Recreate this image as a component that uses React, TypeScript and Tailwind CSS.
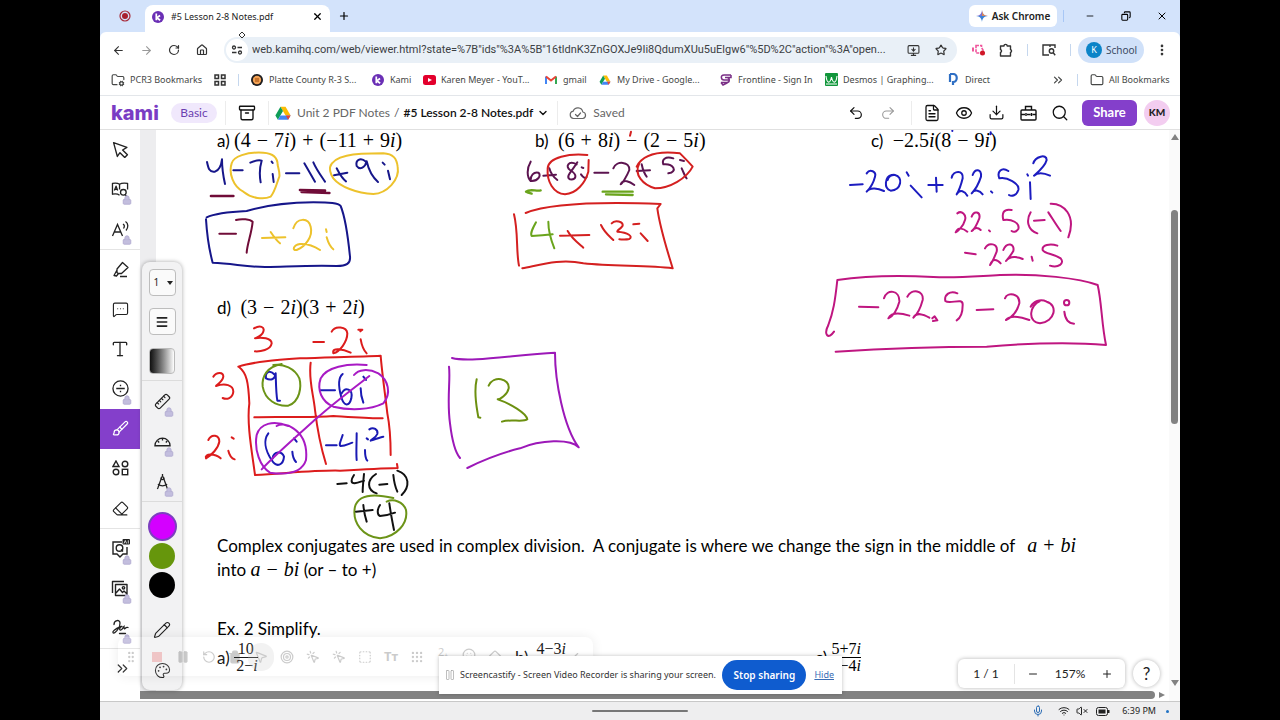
import React from "react";
import {
  Archive, ArrowLeft, ArrowRight, Brush, ChevronDown, ChevronsRight, Copy, Download,
  Eraser, Eye, FileText, Folder, FolderCog, House, Lock, MessageSquareMore, Mic, Minus,
  MonitorDown, MousePointer2, Palette, Pencil, Plus, Redo2, RotateCw, Ruler, Search, Star, Type,
  Undo2, Wifi, X, EllipsisVertical, Menu, VolumeX,
  RotateCcw, Trash2, Target, MousePointerClick, SquareDashed, Grip, GripVertical, Smile, Diamond, Check, Pause,
} from "lucide-react";

const ui = "font-['Noto_Sans','Open_Sans',sans-serif]";
const kamiFont = "font-['Lato','Open_Sans',sans-serif]";

function KamiMark({ className }: { className: string }) {
  return (
    <svg viewBox="0 0 14 14" className={className}>
      <circle cx="7" cy="7" r="7" fill="#6a2fb5" />
      <path d="M5 2.8v8M9.4 5.2 5.6 7.9l3.9 2.9" fill="none" stroke="#fff" strokeWidth="2" />
    </svg>
  );
}

function DriveMark({ className }: { className: string }) {
  return (
    <svg viewBox="0 0 24 22" className={className}>
      <path d="M8 1h8l8 14h-8z" fill="#fbbc04" />
      <path d="M8 1 0 15l4 6.500L12 8z" fill="#0f9d58" />
      <path d="M8 15h16l-4 6.500H4z" fill="#4285f4" />
      <path d="M16.500 15H24l-4 6.500z" fill="#ea4335" />
    </svg>
  );
}

function IconButton({ label, className = "w-7", children }: { label: string; className?: string; children: React.ReactNode }) {
  return (
    <button aria-label={label} className={`flex h-7 shrink-0 items-center justify-center ${className}`}>
      {children}
    </button>
  );
}

function TabStrip() {
  return (
    <div className="flex h-8 shrink-0 items-end bg-[#d3e3fb]">
      <div className="flex h-8 w-[45px] items-center justify-center pl-1">
        <svg viewBox="0 0 12 12" className="size-3">
          <circle cx="6" cy="6" r="5" fill="none" stroke="#a82a38" strokeWidth="1.2" />
          <circle cx="6" cy="6" r="3" fill="#a8202e" />
        </svg>
      </div>
      <div className="flex h-[27px] w-[185px] items-center rounded-t-lg bg-white px-[7px] pb-1">
        <KamiMark className="mr-[7px] size-3 shrink-0" />
        <span className="flex-1 whitespace-nowrap text-[9px] text-[#222]">#5 Lesson 2-8 Notes.pdf</span>
        <button aria-label="Close tab"><X className="size-[11px]" strokeWidth={2.8} /></button>
      </div>
      <IconButton label="New tab" className="h-8 w-7"><Plus className="size-3" strokeWidth={2.4} /></IconButton>
      <div className="flex h-8 flex-1 items-center justify-end">
        <button className="flex h-[22px] w-[88px] items-center justify-center gap-1 rounded-md bg-white text-[10px] font-semibold text-[#222]">
          <svg viewBox="0 0 12 12" className="size-3">
            <path d="M6 0C6.500 4 8 5.500 12 6H0C4 5.500 5.500 4 6 0" fill="#7b6fd0" />
            <path d="M0 6h12C8 6.500 6.500 8 6 12 5.500 8 4 6.500 0 6" fill="#3b82d6" />
            <path d="M6 0C6.500 4 8 5.500 12 6H6z" fill="#d88a5a" />
          </svg>
          Ask Chrome
        </button>
        <div className="ml-1.5 h-3 w-px bg-[#a8c7f5]" />
        <IconButton label="Minimize" className="ml-2 w-9"><Minus className="size-2.5" /></IconButton>
        <IconButton label="Restore" className="w-9"><Copy className="size-2.5 -scale-x-100" strokeWidth={2.6} /></IconButton>
        <IconButton label="Close" className="w-9"><X className="size-3" /></IconButton>
      </div>
    </div>
  );
}

function AddressRow() {
  return (
    <div className="flex h-9 shrink-0 items-center rounded-t-md bg-white pl-1 text-[#333]">
      <IconButton label="Back"><ArrowLeft className="size-[13px]" /></IconButton>
      <IconButton label="Forward"><ArrowRight className="size-[13px] text-[#999]" /></IconButton>
      <IconButton label="Reload"><RotateCw className="size-3" strokeWidth={2.4} /></IconButton>
      <IconButton label="Home"><House className="size-3" strokeWidth={2.4} /></IconButton>
      <div className="ml-2 flex h-[26px] min-w-0 flex-1 items-center rounded-full bg-[#e9f0f7] pl-0.5">
        <button aria-label="Site information" className="flex size-[22px] shrink-0 items-center justify-center rounded-full bg-white">
          <svg viewBox="0 0 12 12" className="size-3" fill="none" stroke="#333" strokeWidth="1.3">
            <circle cx="3" cy="3.500" r="1.500" /><path d="M6.500 3.500H11M1 8.500h4.500" /><circle cx="9" cy="8.500" r="1.500" />
          </svg>
        </button>
        <input
          aria-label="Address"
          className="ml-1 min-w-0 flex-1 bg-transparent font-['Roboto',sans-serif] text-[11px] text-[#3c4043] outline-none"
          defaultValue={'web.kamihq.com/web/viewer.html?state=%7B"ids"%3A%5B"16tldnK3ZnGOXJe9Ii8QdumXUu5uElgw6"%5D%2C"action"%3A"open...'}
        />
        <IconButton label="Install" className="w-6"><MonitorDown className="size-[13px]" /></IconButton>
        <IconButton label="Bookmark" className="mx-1 w-6"><Star className="size-3" strokeWidth={2.4} /></IconButton>
      </div>
      <IconButton label="Screencastify" className="ml-[7px] w-7">
        <svg viewBox="0 0 13 12" className="h-3 w-[13px]">
          <path d="M4 1.500h5.500v2L11 6 9.500 9H4z" fill="none" stroke="#f0569c" strokeWidth="1.6" strokeDasharray="3 1" />
          <path d="M0 3.500h2v4H0z" fill="#f0569c" />
          <circle cx="10.500" cy="9" r="2.500" fill="#d01828" />
        </svg>
      </IconButton>
      <IconButton label="Extensions">
        <svg viewBox="0 0 14 14" className="size-3.5" fill="none" stroke="#333" strokeWidth="1.4" strokeLinejoin="round">
          <path d="M1.500 3H5a1.600 1.600 0 0 1 3.200 0h3.300v3.500a1.600 1.600 0 0 1 0 3V13h-10V9.500a1.600 1.600 0 0 0 0-3z" />
        </svg>
      </IconButton>
      <div className="mx-[7px] h-3 w-px bg-[#c5d7ee]" />
      <IconButton label="Search tabs">
        <svg viewBox="0 0 14 12" className="h-3 w-3.5" fill="none" stroke="#333" strokeWidth="1.4">
          <path d="M13 4V1H1v10h6M8 1v2" /><circle cx="9.500" cy="7" r="2.200" /><path d="m11.200 8.800 2 2.400" />
        </svg>
      </IconButton>
      <div className="mx-[7px] h-3 w-px bg-[#c5d7ee]" />
      <button className="flex h-[26px] w-[66px] shrink-0 items-center gap-1 rounded-full bg-[#d0e1f9] pl-2 text-[10px] text-[#3b4a63]">
        <span className="flex size-4 items-center justify-center rounded-full bg-[#0b84c8] text-[9px] text-white">K</span>
        School
      </button>
      <IconButton label="Menu" className="mx-1 w-7"><EllipsisVertical className="size-3.5" strokeWidth={2.6} /></IconButton>
    </div>
  );
}

function Bookmark({ icon, text, width }: { icon: React.ReactNode; text: string; width: string }) {
  return (
    <a href="#" className={`flex shrink-0 items-center gap-[5px] whitespace-nowrap ${width}`}>
      <span className="flex w-3.5 shrink-0 items-center justify-center">{icon}</span>
      {text}
    </a>
  );
}

function BookmarksRow() {
  return (
    <nav className="flex h-[28px] shrink-0 items-center border-b border-[#e3e6ea] bg-white pb-1 pl-[11px] text-[9px] text-[#454746]">
      <Bookmark width="w-[103px]" text="PCR3 Bookmarks" icon={<FolderCog className="size-3.5" />} />
      <svg viewBox="0 0 12 12" className="size-3 shrink-0" fill="none" stroke="#333" strokeWidth="1.5">
        <path d="M1 1h3.500v3.500H1zM7.500 1H11v3.500H7.500zM1 7.500h3.500V11H1zM7.500 7.500H11V11H7.500z" />
      </svg>
      <div className="ml-3 mr-[11px] h-3 w-px shrink-0 bg-[#c5d7ee]" />
      <Bookmark width="w-[121px]" text="Platte County R-3 S..." icon={
        <svg viewBox="0 0 12 12" className="size-3"><circle cx="6" cy="6" r="6" fill="#1d1d1f" /><circle cx="6" cy="6" r="4.200" fill="#f2a154" /><path d="M4 4h4v4H4z" fill="#c8742c" /></svg>
      } />
      <Bookmark width="w-[51px]" text="Kami" icon={<KamiMark className="size-3" />} />
      <Bookmark width="w-[122px]" text="Karen Meyer - YouT..." icon={
        <svg viewBox="0 0 13 10" className="h-2.5 w-[13px]"><rect width="13" height="10" rx="2.500" fill="#e3002c" /><path d="m5 3 4 2-4 2z" fill="#fff" /></svg>
      } />
      <Bookmark width="w-[54px]" text="gmail" icon={
        <svg viewBox="0 0 12 9" className="h-[9px] w-3" fill="none" strokeWidth="2"><path d="M1 9V1.500" stroke="#4285f4" /><path d="M11 9V1.500" stroke="#34a853" /><path d="m1 1.500 5 4 5-4" stroke="#ea4335" /></svg>
      } />
      <Bookmark width="w-[121px]" text="My Drive - Google..." icon={<DriveMark className="h-2.5 w-3" />} />
      <Bookmark width="w-[105px]" text="Frontline - Sign In" icon={
        <svg viewBox="0 0 12 12" className="size-3" fill="none" stroke="#7a2f86" strokeWidth="1.500"><path d="M11 1H4C0 1 1 6 4 6h5M11 1v2.500H5M1 8.500h6c3 0 3-5 0-5M1 8.500 3 11l5-2.500" /></svg>
      } />
      <Bookmark width="w-[122px]" text="Desmos | Graphing..." icon={
        <svg viewBox="0 0 13 13" className="size-[13px]"><rect width="13" height="13" rx="1" fill="#11963b" /><path d="M1 3c1 8 4 8 5.500 1C8 11 11 11 12 3M1 11h11" fill="none" stroke="#fff" strokeWidth="1.100" /></svg>
      } />
      <Bookmark width="w-[46px]" text="Direct" icon={
        <svg viewBox="0 0 10 13" className="h-[13px] w-2.5" fill="none" stroke="#2f6fc4" strokeWidth="2.200"><path d="M2 1v8M2 1h3c5 0 5 8 0 8v3" /></svg>
      } />
      <div className="flex flex-1 items-center justify-end">
        <ChevronsRight className="size-3.5" />
        <div className="mx-3 h-3 w-px bg-[#c5d7ee]" />
        <Bookmark width="w-[90px]" text="All Bookmarks" icon={<Folder className="size-3.5" />} />
      </div>
    </nav>
  );
}

function KamiHeader() {
  const rule = "h-6 w-px shrink-0 bg-[#ececec]";
  return (
    <header className={`flex h-[34px] shrink-0 items-center border-b border-[#e0e0e0] bg-white pl-[11px] pr-[10px] text-[#111] ${kamiFont}`}>
      <span className="w-[60px] font-['Inter',sans-serif] text-[20px] font-extrabold leading-5 text-[#7a3cc4]">kami</span>
      <span className="flex h-5 w-[46px] items-center justify-center rounded-full bg-[#f0e8fc] text-[12px] text-[#6b3fb0]">Basic</span>
      <div className={`ml-2 ${rule}`} />
      <IconButton label="Archive" className="mx-[7px] w-7"><Archive className="size-[18px]" strokeWidth={1.8} /></IconButton>
      <div className={rule} />
      <DriveMark className="ml-1.5 mr-1.5 h-3.5 w-4 shrink-0" />
      <a href="#" className="whitespace-nowrap text-[12px] text-[#666]">Unit 2 PDF Notes</a>
      <span className="mx-1 text-[12px] text-[#555]">/</span>
      <span className="whitespace-nowrap text-[12px] font-semibold">#5 Lesson 2-8 Notes.pdf</span>
      <button aria-label="File menu" className="ml-1 mr-2"><ChevronDown className="size-3" strokeWidth={2.8} /></button>
      <div className={rule} />
      <svg viewBox="0 0 18 14" className="ml-[11px] mr-1.5 h-3.5 w-[18px] shrink-0" fill="none" stroke="#666" strokeWidth="1.2" strokeLinecap="round" strokeLinejoin="round">
        <path d="M4.500 12.500a3.700 3.700 0 0 1-.3-7.300A5 5 0 0 1 13.800 6a3.300 3.300 0 0 1 0 6.500zM6.500 8.500l2 2 3-3.500" />
      </svg>
      <span className="flex-1 text-[12px] text-[#666]">Saved</span>
      <IconButton label="Undo" className="w-8"><Undo2 className="size-4" strokeWidth={1.8} /></IconButton>
      <IconButton label="Redo" className="w-8"><Redo2 className="size-4 text-[#999]" strokeWidth={1.6} /></IconButton>
      <div className={`ml-[7px] mr-1 ${rule}`} />
      <IconButton label="Document" className="w-8"><FileText className="size-[18px]" strokeWidth={1.7} /></IconButton>
      <IconButton label="View" className="w-8"><Eye className="size-[18px]" strokeWidth={1.7} /></IconButton>
      <IconButton label="Download" className="w-8"><Download className="size-[17px]" strokeWidth={1.7} /></IconButton>
      <IconButton label="Toolbox" className="w-8">
        <svg viewBox="0 0 17 16" className="h-4 w-[17px]" fill="none" stroke="#111" strokeWidth="1.400"><rect x="1" y="5" width="15" height="10" rx="1" /><path d="M5.500 5V1.500h6V5M1 9.500h4M7 9.500h3.500M12.500 9.500H16M6 8v3M11.500 8v3" /></svg>
      </IconButton>
      <IconButton label="Search" className="w-8"><Search className="size-[18px]" strokeWidth={1.7} /></IconButton>
      <button className="ml-1.5 h-[26px] w-[55px] rounded-md bg-[#843fcb] text-[13px] font-bold text-white">Share</button>
      <button className="ml-[7px] flex size-[26px] items-center justify-center rounded-full bg-[#f3cdf0] text-[10px] font-black text-[#222]">KM</button>
    </header>
  );
}

const tools: { name: string; icon: React.ReactNode; locked?: boolean; active?: boolean; ruleAfter?: boolean }[] = [
  { name: "Select", icon: <svg viewBox="0 0 16 16" className="size-[17px]" fill="none" stroke="#222" strokeWidth="1.3" strokeLinejoin="round"><path d="m1.500 1.500 12.500 4.500-4 2.500 4.500 4.500-2.500 2.500-4.500-4.500L5 14.500z" /></svg> },
  { name: "Dictionary", locked: true, icon: (
    <svg viewBox="0 0 20 18" className="h-[17px] w-[19px]" fill="none" stroke="#222" strokeWidth="1.400" strokeLinejoin="round">
      <path d="M9 3.500C7 2 4 2 1.500 2.500V14c2.500-.5 5.500-.5 7.500 1M9 3.500V9M9 3.500C11 2 14 2 17.500 2.500V9M3.500 10 5.300 5.500 7 10M4 8.800h2.600" />
      <circle cx="13" cy="12" r="3" /><path d="m15 14.500 2 2.500" />
    </svg>
  ) },
  { name: "Text to speech", locked: true, ruleAfter: true, icon: <svg viewBox="0 0 18 18" className="size-[18px]" fill="none" stroke="#222" strokeWidth="1.3"><path d="M1.500 16 6.500 4.500 11.500 16M3.200 12h6.600M12 4c1.500 1 1.500 3 .5 4.500M14.500 1.500c3 2 3 6 .5 9" /></svg> },
  { name: "Highlight", icon: (
    <svg viewBox="0 0 17 17" className="size-[17px]" fill="none" stroke="#222" strokeWidth="1.300" strokeLinejoin="round">
      <path d="M10.500 1.500 16 6.500 9.500 12.500H6L5 11.500V8zM5 9 2 14.500l2.500.5 2-2.500M8 15.500h7" />
    </svg>
  ) },
  { name: "Comment", icon: <MessageSquareMore className="size-[17px]" strokeWidth={1.6} /> },
  { name: "Text", icon: <Type className="size-[20px]" strokeWidth={1.6} /> },
  { name: "Equation", locked: true, icon: <svg viewBox="0 0 18 18" className="size-[17px]" fill="none" stroke="#222" strokeWidth="1.4"><circle cx="9" cy="9" r="8" /><path d="M4.500 9h9M9 5v1.500M9 11.500V13" /></svg> },
  { name: "Draw", icon: <Brush className="size-[17px] text-white" strokeWidth={1.7} />, active: true },
  { name: "Shapes", icon: <svg viewBox="0 0 17 16" className="h-4 w-[17px]" fill="none" stroke="#222" strokeWidth="1.400"><path d="M4 1 7 6.500H1z" /><circle cx="13" cy="4" r="2.800" /><circle cx="4" cy="12" r="2.800" /><rect x="10.300" y="9.300" width="5.400" height="5.400" /></svg> },
  { name: "Erase", icon: <Eraser className="size-[17px]" strokeWidth={1.6} />, ruleAfter: true },
  { name: "Questions", locked: true, icon: <svg viewBox="0 0 20 20" className="size-5" fill="none" stroke="#222" strokeWidth="1.400"><path d="M12 3H3v12h4l3 3 3-3h4V8" /><circle cx="9.500" cy="9" r="3.300" /><path d="m11 10.500 2 2" /><rect x="12.500" y="0" width="7.500" height="5.500" rx="1" fill="#222" stroke="none" /><path d="m14 4.500 1.300-3 1.300 3M18.300 1.300v3.200" stroke="#fff" strokeWidth=".8" /></svg> },
  { name: "Media", locked: true, icon: (
    <svg viewBox="0 0 18 17" className="h-[17px] w-[18px]" fill="none" stroke="#222" strokeWidth="1.400" strokeLinejoin="round">
      <path d="M1.500 13V1.500H13M4.500 4.500H16v11H4.500zM5 13l3.500-4 3 3.500 1.500-1.500 3 3" /><circle cx="12.500" cy="7.800" r="1.200" />
    </svg>
  ) },
  { name: "Sign", locked: true, icon: (
    <svg viewBox="0 0 19 18" className="h-[18px] w-[19px]" fill="none" stroke="#222" strokeWidth="1.300" strokeLinecap="round">
      <path d="M3 5.500C3 1 9 0 9 4S6 12 4 13.500s-3-.5-1-2 5-4 8-4M10 7.500c-2 2-1.500 4 0 3.500s2-2.500 3-3.500c0 1.500 0 3 1 2s2-1.500 3-1M8.500 14.500h6" />
    </svg>
  ), ruleAfter: true },
];

function LockBadge() {
  return <Lock className="absolute bottom-1 right-2 size-2.5 fill-[#c3bede] text-[#b5afd3]" strokeWidth={2.4} />;
}

function Sidebar() {
  return (
    <aside className="flex w-10 shrink-0 flex-col bg-white pb-3 text-[#222]">
      {tools.map((t) => (
        <button
          key={t.name}
          aria-label={t.name}
          className={`relative flex min-h-0 flex-1 items-center justify-center ${t.active ? "bg-[#843fcb]" : ""} ${t.ruleAfter ? "border-b border-[#e4e4e4]" : ""}`}
        >
          {t.icon}
          {t.locked && <LockBadge />}
        </button>
      ))}
      <button aria-label="Expand" className="flex h-10 shrink-0 items-center justify-center pl-1">
        <ChevronsRight className="size-[17px]" strokeWidth={1.7} />
      </button>
    </aside>
  );
}

function DrawPanel() {
  const box = "flex h-[27px] w-[27px] shrink-0 items-center justify-center rounded border border-[#bdbdbd] bg-[#fafafa]";
  const cell = "relative flex h-10 w-full shrink-0 items-center justify-center";
  return (
    <div className="absolute left-0.5 top-[132px] z-10 flex w-10 flex-col items-center rounded-lg bg-[#f2f2f3] pt-[7px] text-[#222] shadow-[0_0_4px_rgba(0,0,0,0.35)]">
      <div className="relative">
        <select aria-label="Stroke size" className={`block appearance-none pl-1 pr-3 text-[10px] ${box} ${ui}`} defaultValue="1">
          <option>1</option>
          <option>2</option>
        </select>
        <svg viewBox="0 0 6 4" className="pointer-events-none absolute right-[3px] top-3 h-1 w-1.5"><path d="M0 0h6L3 4z" fill="#222" /></svg>
      </div>
      <button aria-label="Line style" className={`mt-3 ${box}`}><Menu className="size-3.5" strokeWidth={2.8} /></button>
      <button aria-label="Opacity" className="mt-[13px] size-[26px] shrink-0 rounded border border-[#bbb] bg-linear-to-r from-[#111] to-white" />
      <div className="mt-1.5 h-px w-full bg-[#dcdcdc]" />
      <button aria-label="Ruler" className={cell}><Ruler className="size-[17px] -scale-x-100" strokeWidth={1.7} /><LockBadge /></button>
      <button aria-label="Protractor" className={cell}>
        <svg viewBox="0 0 18 11" className="h-[11px] w-[17px]" fill="none" stroke="#222" strokeWidth="1.400"><path d="M1 10a8 8 0 0 1 16 0zM9 2v2.500M4 5l1.500 1.500M14 5l-1.500 1.500" /></svg>
        <LockBadge />
      </button>
      <button aria-label="Compass" className={cell}>
        <svg viewBox="0 0 14 18" className="h-[17px] w-[13px]" fill="none" stroke="#222" strokeWidth="1.400"><path d="M7 1v3M6 5 2 16l-.500 1M8 5l4 11 .500 1M2 12c3 2 7 2 10 0" /><circle cx="7" cy="5.500" r="1.500" /></svg>
        <LockBadge />
      </button>
      <div className="h-px w-full bg-[#dcdcdc]" />
      <button aria-label="Magenta" className="mt-2.5 size-[29px] shrink-0 rounded-full border-2 border-[#7d3fc0] bg-[#d400ff]" />
      <button aria-label="Green" className="mt-0.5 size-[26px] shrink-0 rounded-full bg-[#66960c]" />
      <button aria-label="Black" className="mt-[3px] size-[26px] shrink-0 rounded-full bg-black" />
      <button aria-label="Pencil" className="mt-3 flex h-10 w-full items-center justify-center"><Pencil className="size-[18px]" strokeWidth={1.5} /></button>
      <button aria-label="Palette" className="flex h-10 w-full items-center justify-center"><Palette className="size-[17px]" strokeWidth={1.5} /></button>
    </div>
  );
}

function M({ children }: { children: React.ReactNode }) {
  return <span className="font-['Liberation_Serif',serif] text-[20px] leading-none">{children}</span>;
}

/** Binary operator with the wider spacing used in typeset maths. */
function Op({ children }: { children: string }) {
  return <span className="mx-1.5">{children}</span>;
}

function Fraction({ top, bottom }: { top: React.ReactNode; bottom: React.ReactNode }) {
  return (
    <span className="flex flex-col items-end font-['Liberation_Serif',serif] text-[16px] leading-4">
      <span className="h-[17px] border-b border-black">{top}</span>
      <span className="h-4">{bottom}</span>
    </span>
  );
}

function Ink() {
  return (
    <svg
      viewBox="156 130 1013 561"
      className="pointer-events-none absolute left-0 top-0 h-[561px] w-[1013px]"
      fill="none"
      strokeLinecap="round"
      strokeLinejoin="round"
      strokeWidth="6"
    >
      <g transform="translate(100 130) scale(0.33333)">
        <g stroke="#16168a">
          <path d="M321 96C325 115 328 128 345 125 358 120 364 105 366 88 366 115 370 140 375 162" />
          <path d="M400 121h28M451 98C465 92 478 90 485 92 478 115 478 135 482 157M515 95l3 4M518 132l3 24" />
          <path d="M558 130h40M613 100l32 55M640 97C650 120 665 140 675 155" />
          <path d="M702 136 742 128M710 115C718 130 725 145 738 154" />
          <path d="M798 95C780 80 766 92 770 108 780 122 796 112 800 94 806 120 818 142 834 156M848 98l6 6M864 122l6 26" />
          <path d="M320 262C345 250 400 245 440 243 500 225 560 218 640 217 690 217 715 218 722 228 735 260 745 330 750 380 752 400 740 408 710 408 640 405 560 410 500 411 440 412 400 400 338 398 325 350 320 300 318 268" />
        </g>
        <g stroke="#edc22c">
          <path d="M395 100C385 130 400 170 430 185 455 205 490 210 512 200 525 185 530 160 538 140 540 130 535 115 533 105 533 82 520 70 490 68 440 65 400 80 395 100" />
          <path d="M690 112C700 75 760 70 850 70 880 72 890 85 893 110 900 150 860 190 820 192 770 190 720 170 700 145 690 130 688 115 692 105" />
          <path d="M486 324 556 322M512 306C520 318 530 332 540 340M580 295C590 262 625 262 632 290 640 320 615 350 590 360 575 362 580 345 600 342 625 340 645 350 660 360M678 298l2 8M680 322C685 340 690 350 700 358" />
        </g>
        <g stroke="#700c38">
          <path d="M333 198h67M600 180l75 2M605 186l83 3" strokeWidth="8" />
          <path d="M358 311h50M408 270C425 265 450 268 458 275 455 310 442 340 440 368" />
        </g>
      </g>

      <g transform="translate(100 310) scale(0.33333)">
        <g stroke="#dc1c1c">
          <path d="M462 55C480 45 495 50 490 65 485 80 470 82 465 85 485 80 515 85 515 100 512 120 480 125 465 124" />
          <path d="M640 96h32M695 65C705 45 740 50 742 70 742 95 720 125 700 130 695 110 730 118 752 128M775 59h12l-6 5M782 88C785 105 790 120 800 130" />
          <path d="M340 200C350 185 370 185 370 200 368 215 350 225 348 228 375 218 400 225 400 245 398 265 380 270 368 264" />
          <path d="M325 390C335 370 358 375 358 395 355 415 335 435 318 445 312 430 345 430 362 445M395 382l6 4M385 422C388 435 395 445 404 448" />
          <path d="M415 170C460 155 530 150 600 145 680 142 780 140 842 137 845 180 855 250 862 310 870 350 872 400 872 435" />
          <path d="M418 172C440 190 445 215 448 280 440 340 455 420 465 495 560 490 650 480 720 482 790 478 850 475 893 474l-2-12" />
          <path d="M632 158C625 210 640 250 645 300 652 360 665 420 678 462M463 322C540 318 620 325 700 318 760 322 810 326 848 325" />
        </g>
        <g stroke="#1a1ab4">
          <path d="M525 195C510 178 495 185 498 205 510 212 525 210 527 190 528 220 528 250 532 272h8" />
          <path d="M660 241h45M728 192C712 205 715 230 724 262 732 290 748 290 754 265 760 235 735 230 725 250M790 200l8 10M782 235C782 250 785 265 790 278" />
          <path d="M505 370C490 390 495 420 515 450 530 475 550 465 552 440 545 420 520 425 518 445M582 385l8 10M577 425C578 440 582 450 588 456" />
          <path d="M678 406h32M728 375C722 395 715 405 722 408 735 408 745 402 757 398M770 370C770 400 768 430 770 450M800 385l4 3M795 420C795 435 798 448 802 452M808 358C820 350 835 358 832 372 828 382 815 388 812 392 825 388 840 382 850 380" />
        </g>
        <g stroke="#a81ac4">
          <path d="M800 165C740 160 680 170 662 205 650 240 665 275 700 290 750 302 810 300 850 280 875 250 865 210 835 190 805 175 775 178 762 195" />
          <path d="M485 478C530 430 600 370 650 325 700 280 760 235 808 198" />
          <path d="M565 348C520 330 480 340 470 375 462 420 480 470 510 488 560 495 605 490 618 450 622 410 610 375 580 355 560 340 540 342 530 348" />
        </g>
        <g stroke="#6c9418">
          <path d="M545 162C500 170 485 200 488 230 495 270 530 290 565 287 600 275 605 230 598 205 585 175 550 160 520 165" />
          <path d="M880 564C820 550 775 555 765 590 755 640 790 680 840 685 890 680 925 640 918 600 910 575 880 565 860 575" />
        </g>
        <g stroke="#111">
          <path d="M712 522 740 520M762 495C752 510 752 520 764 520 775 518 785 514 792 512M792 492C790 515 788 530 788 546M828 492C800 510 800 540 830 550M838 524l24-2M880 495C882 515 885 530 892 545M892 482C930 495 930 530 905 555" />
          <path d="M768 605 818 600M790 585C792 605 795 620 800 635M840 585C830 600 832 615 840 618 860 616 875 612 885 608M868 580C872 610 878 640 882 660" />
        </g>
      </g>

      <g transform="translate(430 340) scale(0.33333)">
        <path stroke="#9c18b8" d="M66 54C120 68 250 45 375 38 375 120 400 260 446 322 420 295 330 300 270 325 210 340 150 365 112 384M57 80C62 120 50 180 60 250 66 300 78 340 90 354" />
        <path stroke="#6c9010" d="M140 118C130 160 140 200 145 232l6 1M176 137C190 105 240 115 236 145 232 165 210 178 203 178 240 190 290 220 292 238 280 248 240 236 216 245" />
      </g>

      <g transform="translate(500 125) scale(0.33333)">
        <g stroke="#5c1450">
          <path d="M92 110C80 130 80 155 92 168 115 170 125 150 115 143 100 140 92 152 92 165M130 152l38-3M148 130C152 145 162 158 172 165M230 118C205 105 195 125 210 135 235 150 228 165 210 163 195 155 215 140 232 112M245 127l5 2M243 148C250 158 256 162 260 156" />
          <path d="M283 143h42M340 130C350 105 390 110 388 135 380 155 365 178 362 178 370 160 390 170 403 180M410 138l40-2M425 118C428 132 432 145 440 155M520 100C495 92 485 105 490 118 520 115 535 140 505 145M540 105l12 3M545 130C552 145 555 155 560 160" />
        </g>
        <g stroke="#d42020">
          <path d="M262 90C210 85 145 95 143 130 140 170 160 205 195 208 230 205 255 175 265 140L266 105" />
          <path d="M410 125C430 85 480 78 540 85 555 100 570 115 578 125 560 160 510 190 465 190 430 180 400 150 418 115" />
          <path d="M77 264C150 235 300 230 482 237L472 250C480 310 500 370 518 430 440 420 340 425 250 415 180 400 120 420 67 430M42 268C55 320 48 380 57 422" />
          <path d="M180 332 268 330M203 318C215 340 235 355 250 368M303 300C315 325 330 335 340 345M335 295C345 283 370 290 368 302 362 312 350 316 352 320 385 322 400 335 388 342 375 345 365 343 358 343M400 298l18-2M422 325 443 348" />
          <path d="M393 20l-3 12" />
        </g>
        <g stroke="#6aa41c">
          <path d="M78 200C90 190 110 200 122 196M82 202l13 4M308 200h90M318 208l80 2" strokeWidth="7" />
          <path d="M108 292C98 310 90 325 95 333 115 332 140 330 158 328M145 290C145 320 155 350 163 370" />
        </g>
      </g>

      <g transform="translate(820 125) scale(0.33333)">
        <g stroke="#1c1cc0">
          <path d="M90 180l38-2M140 145C150 130 170 140 165 155 160 175 150 190 140 200 150 185 175 190 192 198M215 150C195 155 190 190 212 197 245 195 250 155 225 150 215 148 205 155 203 165M260 142l6 10M272 182l33 35" />
          <path d="M325 180h43M348 158l2 42M395 158C400 135 432 135 428 160 422 185 415 200 410 208 420 190 435 200 442 212M458 150C465 130 485 130 483 155 475 180 462 198 455 205 465 190 480 198 488 208M513 199l4 4" />
          <path d="M565 138C545 125 530 140 538 160 560 155 600 175 595 195 590 212 575 215 567 210M622 148l2 4M630 172l2 50M640 115C645 95 680 85 680 105 675 125 650 145 642 152 655 140 675 145 690 152M397 17v1M512 22v6" />
        </g>
        <g stroke="#bf1680">
          <path d="M412 265C425 255 440 270 435 285 430 305 412 320 407 322 415 305 430 310 442 320M455 275C462 255 482 260 478 280 470 300 462 315 455 318 465 305 475 308 482 315M507 316l3 3M575 255C550 250 545 265 550 285 575 280 600 295 595 312 588 322 580 322 575 318M632 262C618 285 622 315 652 325M642 287l32-2M685 262C700 285 712 305 722 318M692 236C730 235 770 270 745 337" />
          <path d="M435 383l32 5M495 370C505 350 535 355 530 380 522 400 515 415 510 420 518 400 530 402 542 415M550 375C560 350 585 355 580 378 570 395 562 403 558 408 570 392 595 395 608 402M635 395l3 12M712 362C690 355 665 360 668 375 675 388 700 385 722 400 735 415 715 430 690 422" />
          <path d="M47 680C200 670 350 665 500 665 620 655 750 650 858 660 845 600 845 530 833 480 780 460 650 445 540 450 450 455 400 460 340 456 220 450 120 455 52 465 45 530 40 560 25 600 10 630 25 645 42 620" />
          <path d="M117 545l58 2M192 520C200 490 240 495 238 530 230 560 215 575 205 580 215 560 245 565 268 572M262 515C275 490 312 495 308 525 300 555 290 570 280 578 290 560 310 568 328 578M337 580l7-6 8 12-13 2M412 505C390 495 372 510 376 528 390 540 430 515 428 540 428 565 420 580 410 586M470 555l50-2M555 520C562 500 600 505 598 535 590 565 570 580 558 585 570 570 600 575 628 585M660 528C630 540 620 590 660 595 705 590 715 540 680 530 660 520 640 530 632 545M733 560C735 580 745 595 762 596" />
          <circle cx="740" cy="533" r="8" />
        </g>
      </g>
    </svg>
  );
}

function DocumentPage() {
  return (
    <main className="relative ml-4 h-full overflow-hidden bg-white pl-[61px] font-['Lato',sans-serif] text-[17px] leading-5 text-black">
      <div className="grid h-5 grid-cols-[318px_336px_1fr] whitespace-nowrap">
        <p>a) <M>(4<Op>−</Op>7<i>i</i>)<Op>+</Op>(−11<Op>+</Op>9<i>i</i>)</M></p>
        <p>b) <M>&nbsp;(6<Op>+</Op>8<i>i</i>)<Op>−</Op>(2<Op>−</Op>5<i>i</i>)</M></p>
        <p>c) <M>&nbsp;−2.5<i>i</i>(8<Op>−</Op>9<i>i</i>)</M></p>
      </div>
      <p className="mt-[147px] h-5">d) <M>&nbsp;(3<Op>−</Op>2<i>i</i>)(3<Op>+</Op>2<i>i</i>)</M></p>
      <p className="mt-[217px] h-12 whitespace-nowrap leading-6">
        Complex conjugates are used in complex division.&nbsp; A conjugate is where we change the sign in the middle of
        <span className="ml-3"><M><i>a</i><Op>+</Op><i>bi</i></M></span>
        <br />
        into <M><i>a</i><Op>−</Op><i>bi</i></M> (or – to +)
      </p>
      <p className="mt-[37px]">Ex. 2 Simplify.</p>
      <div className="mt-0.5 grid grid-cols-[298px_300px_1fr]">
        <div className="flex items-center gap-1">a) <Fraction top="&nbsp;10&nbsp;" bottom={<>2−<i>i</i></>} /></div>
        <div className="flex items-center gap-2">b) <Fraction top={<>4−3<i>i</i></>} bottom="" /></div>
        <div className="flex items-center gap-1">c) <Fraction top={<>5+7<i>i</i></>} bottom={<>−4<i>i</i></>} /></div>
      </div>
      <Ink />
    </main>
  );
}

function RecorderBar() {
  const icon = "size-3.5";
  const items = [
    <GripVertical className={icon} />, <div className="size-2.5 bg-[#e23b3b]" />, <Pause className={`${icon} fill-current`} strokeWidth={1.5} />,
    <RotateCcw className={icon} />, <Trash2 className={`${icon} fill-current`} />, <MousePointer2 className={icon} />,
    <Target className={icon} />, <MousePointerClick className={icon} />, <MousePointerClick className={icon} />,
    <SquareDashed className={icon} />, <span className="font-bold">Tт</span>, <Grip className={icon} />,
    <span className="-mt-2 text-[11px]">2₊</span>, <Smile className={`${icon} -mt-1`} />, <Diamond className={icon} />, <span />, <span />, <Check className={icon} />,
  ];
  return (
    <div className={`absolute -left-[22px] top-[507px] z-20 flex h-[39px] w-[475px] items-center rounded-lg bg-white/10 text-[13px] text-[#333] shadow-[0_0_12px_rgba(0,0,0,0.08)] ${ui}`}>
      {items.map((it, i) => (
        <button key={i} aria-label={`Recorder tool ${i + 1}`} className={`flex h-7 w-[26px] shrink-0 items-center justify-center opacity-25 ${i === 5 ? "rounded-full bg-[#ccc]" : ""}`}>
          {it}
        </button>
      ))}
    </div>
  );
}

function SharingBar() {
  return (
    <div className={`absolute bottom-[7px] left-[299px] z-30 flex h-[38px] w-[403px] items-center bg-white pl-[5px] text-[9px] text-[#333] shadow-[0_0_4px_rgba(0,0,0,0.25)] ${ui}`}>
      <Pause className="mr-1 size-3 shrink-0 text-[#aaa]" strokeWidth={1.5} />
      <span className="flex-1 whitespace-nowrap">Screencastify - Screen Video Recorder is sharing your screen.</span>
      <button className="h-[30px] w-[84px] shrink-0 rounded-full bg-[#0f5ccf] text-[10px] font-semibold text-white">Stop sharing</button>
      <a href="#" className="mx-2 text-[#3a6db5] underline">Hide</a>
    </div>
  );
}

function ZoomControls() {
  return (
    <div className={`absolute bottom-[13px] right-5 z-10 flex items-center gap-2 text-[12px] text-[#222] ${kamiFont}`}>
      <div className="flex h-[29px] w-[167px] items-center rounded-md bg-white shadow-[0_0_4px_rgba(0,0,0,0.3)]">
        <span className="w-[56px] text-center">1 / 1</span>
        <div className="h-5 w-px bg-[#e4e4e4]" />
        <button aria-label="Zoom out" className="flex w-9 justify-center"><Minus className="size-3" /></button>
        <span className="w-[38px] text-center">157%</span>
        <button aria-label="Zoom in" className="flex flex-1 justify-center"><Plus className="size-3" /></button>
      </div>
      <button className="size-[27px] rounded-full bg-white text-[17px] leading-none shadow-[0_0_4px_rgba(0,0,0,0.3)]">?</button>
    </div>
  );
}

function StatusBar() {
  return (
    <footer className={`grid h-[19px] shrink-0 grid-cols-3 items-center border-t border-[#c8c8c8] bg-[#eeeeef] text-[9px] text-[#222] ${ui}`}>
      <span />
      <div className="mx-auto h-0.5 w-24 rounded bg-[#777]" />
      <div className="flex items-center justify-end pr-[11px]">
        <Mic className="mr-3.5 size-3 text-[#2c6db5]" />
        <Wifi className="mr-1.5 size-3" />
        <VolumeX className="mr-2 size-3" />
        <svg viewBox="0 0 14 9" className="mr-3 h-[9px] w-3.5"><rect x=".500" y=".500" width="11" height="8" rx="2" fill="none" stroke="#222" /><path d="M2.500 2.500h7v4h-7zM12 3h1.500v3H12z" fill="#222" /></svg>
        6:39 PM
        <span className="ml-2.5 size-[3px] rounded-full bg-[#2173c4]" />
      </div>
    </footer>
  );
}

export default function App() {
  return (
    <div className="h-screen overflow-hidden bg-black px-[100px]">
      <div className={`relative flex h-full flex-col overflow-hidden bg-[#d3e3fb] ${ui}`}>
        <TabStrip />
        <AddressRow />
        <BookmarksRow />
        <KamiHeader />
        <svg viewBox="0 0 8 8" className="absolute left-[138px] top-[31px] size-2" fill="#fff" stroke="#333"><path d="m4 1 3 3-3 3-3-3z" /></svg>
        <div className="flex min-h-0 flex-1">
          <Sidebar />
          <div className="relative flex min-w-0 flex-1 bg-[#ededef]">
            <div className="flex min-w-0 flex-1 flex-col">
              <div className="min-h-0 flex-1"><DocumentPage /></div>
              <div className="flex h-2.5 shrink-0 items-start bg-white">
                <div className="h-2 flex-1 rounded-r-full bg-[#828282]" />
                <svg viewBox="0 0 6 8" className="ml-1 mr-1 h-2 w-1.5"><path d="m0 1 6 3-6 3z" fill="#828282" /></svg>
              </div>
            </div>
            <div className="flex w-[11px] shrink-0 flex-col items-center bg-[#fafafa] pb-[15px] pt-1">
              <svg viewBox="0 0 8 6" className="h-1.5 w-2"><path d="M0 6h8L4 0z" fill="#828282" /></svg>
              <div className="mt-[70px] h-[214px] w-[7px] rounded-full bg-[#828282]" />
              <div className="flex-1" />
              <svg viewBox="0 0 8 6" className="h-1.5 w-2"><path d="M0 0h8L4 6z" fill="#828282" /></svg>
            </div>
            <DrawPanel />
            <RecorderBar />
            <SharingBar />
            <ZoomControls />
          </div>
        </div>
        <StatusBar />
      </div>
    </div>
  );
}
